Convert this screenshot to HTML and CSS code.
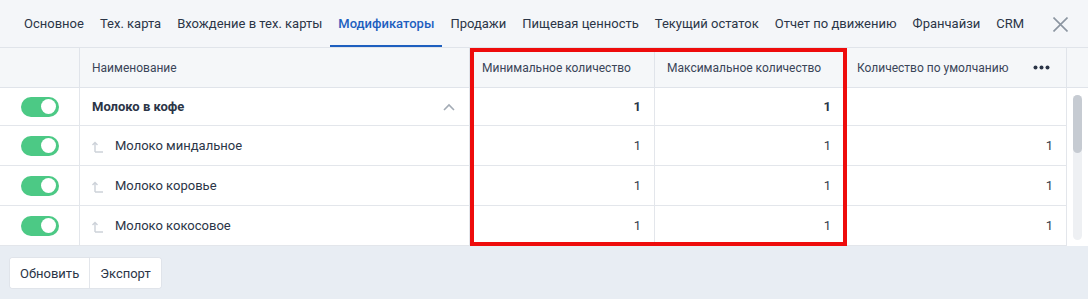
FILE: index.html
```html
<!DOCTYPE html>
<html lang="ru">
<head>
<meta charset="utf-8">
<link rel="stylesheet" href="styles.css">
</head>
<body>
<div class="page">
  <nav class="tabs">
    <span class="tab">Основное</span>
    <span class="tab">Тех. карта</span>
    <span class="tab">Вхождение в тех. карты</span>
    <span class="tab active">Модификаторы</span>
    <span class="tab">Продажи</span>
    <span class="tab">Пищевая ценность</span>
    <span class="tab">Текущий остаток</span>
    <span class="tab">Отчет по движению</span>
    <span class="tab">Франчайзи</span>
    <span class="tab">CRM</span>
    <span class="close"><svg width="15" height="15" viewBox="0 0 15 15"><path d="M0.5 0.5 L14.5 14.5 M14.5 0.5 L0.5 14.5" stroke="#8b95a1" stroke-width="1.6" fill="none"/></svg></span>
  </nav>
  <div class="table-wrap">
    <div class="grid">
      <div class="h c-tog"></div>
      <div class="h c-name">Наименование</div>
      <div class="h c-num">Минимальное количество</div>
      <div class="h c-num">Максимальное количество</div>
      <div class="h c-def"><span>Количество по умолчанию</span><svg class="dots" width="17" height="5" viewBox="0 0 17 5"><circle cx="2.5" cy="2.5" r="2" fill="#2b3547"/><circle cx="8.5" cy="2.5" r="2" fill="#2b3547"/><circle cx="14.5" cy="2.5" r="2" fill="#2b3547"/></svg></div>
      <div class="h c-sc"></div>

      <div class="r first c-tog"><span class="toggle"><span class="knob"></span></span></div>
      <div class="r first c-name parent"><span>Молоко в кофе</span><svg class="chev" width="12" height="8" viewBox="0 0 12 8"><path d="M1 7 L6 2 L11 7" stroke="#a3abb5" stroke-width="1.6" fill="none"/></svg></div>
      <div class="r first v">1</div>
      <div class="r first v">1</div>
      <div class="r first v"></div>
      <div class="scroll"><div class="track"><div class="thumb"></div></div></div>

      <div class="r c-tog"><span class="toggle"><span class="knob"></span></span></div>
      <div class="r c-name child"><svg class="sub" width="12" height="12" viewBox="0 0 12 12"><path d="M3 11 L3 1.5 M0.5 4 L3 1.5 L5.5 4 M3 11 L11 11" stroke="#cdd2d9" stroke-width="1.4" fill="none"/></svg><span>Молоко миндальное</span></div>
      <div class="r v">1</div>
      <div class="r v">1</div>
      <div class="r v">1</div>

      <div class="r c-tog"><span class="toggle"><span class="knob"></span></span></div>
      <div class="r c-name child"><svg class="sub" width="12" height="12" viewBox="0 0 12 12"><path d="M3 11 L3 1.5 M0.5 4 L3 1.5 L5.5 4 M3 11 L11 11" stroke="#cdd2d9" stroke-width="1.4" fill="none"/></svg><span>Молоко коровье</span></div>
      <div class="r v">1</div>
      <div class="r v">1</div>
      <div class="r v">1</div>

      <div class="r c-tog"><span class="toggle"><span class="knob"></span></span></div>
      <div class="r c-name child"><svg class="sub" width="12" height="12" viewBox="0 0 12 12"><path d="M3 11 L3 1.5 M0.5 4 L3 1.5 L5.5 4 M3 11 L11 11" stroke="#cdd2d9" stroke-width="1.4" fill="none"/></svg><span>Молоко кокосовое</span></div>
      <div class="r v">1</div>
      <div class="r v">1</div>
      <div class="r v">1</div>
    </div>
    <div class="highlight"></div>
  </div>
  <div class="footer">
    <div class="btns">
      <button class="btn">Обновить</button>
      <button class="btn">Экспорт</button>
    </div>
  </div>
</div>
</body>
</html>
```

FILE: styles.css
```css
* { box-sizing: border-box; }
html, body { margin: 0; padding: 0; }
body {
  font-family: Roboto, "Noto Sans", sans-serif;
  color: #2b3547;
  background: #e8edf3;
  width: 1088px;
  height: 299px;
  overflow: hidden;
}
.tabs {
  display: flex;
  align-items: center;
  height: 48px;
  padding-left: 16px;
  background: #f4f6f9;
  border-bottom: 1px solid #e0e4ea;
  font-size: 13px;
}
.tab {
  padding: 0 8px;
  height: 47px;
  display: flex;
  align-items: center;
  color: #2b3547;
  white-space: nowrap;
  border-bottom: 2px solid transparent;
  padding-top: 2px;
}
.tab.active {
  color: #1d5fbf;
  font-weight: 500;
  border-bottom-color: #1d5fbf;
}
.close {
  margin-left: 21px;
  display: flex;
  align-items: center;
  padding-top: 2px;
}
.table-wrap {
  position: relative;
  background: #fff;
}
.grid {
  display: grid;
  grid-template-columns: 80px 390px 185px 190px 222px 21px;
  grid-template-rows: 40px 38px 40px 40px 40px;
}
.h {
  background: #f5f7f9;
  border-bottom: 1px solid #e0e4ea;
  border-right: 1px solid #e0e4ea;
  font-size: 12px;
  color: #3a4558;
  display: flex;
  align-items: center;
  padding: 0 12px;
}
.h.c-sc { border-right: none; }
.c-def { justify-content: space-between; padding-right: 16px; }
.dots { display: block; }
.r {
  border-bottom: 1px solid #e3e6eb;
  border-right: 1px solid #e3e6eb;
  display: flex;
  align-items: center;
  font-size: 13px;
  background: #fff;
}
.c-tog { justify-content: center; }
.c-name { padding: 0 12px; }
.parent { justify-content: space-between; font-weight: 700; }
.chev { margin-right: 2px; }
.child .sub { margin-right: 11px; margin-top: 2px; }
.v { justify-content: flex-end; padding-right: 13px; color: #333c4b; }
.first.v { font-weight: 700; color: #2b3547; }
.toggle {
  width: 38px;
  height: 20px;
  border-radius: 10px;
  background: #4cc985;
  display: flex;
  align-items: center;
  justify-content: flex-end;
  padding-right: 3px;
}
.knob {
  width: 15px;
  height: 15px;
  border-radius: 50%;
  background: #fff;
}
.scroll {
  grid-row: span 4;
  background: #fff;
  padding: 7px 6px 6px 6px;
}
.track {
  height: 145px;
  width: 9px;
  background: #eef0f3;
  border-radius: 5px;
}
.thumb {
  height: 58px;
  width: 9px;
  background: #c6cbd2;
  border-radius: 5px;
}
.highlight {
  position: absolute;
  left: 470px;
  top: 0;
  width: 377px;
  height: 198px;
  border: 4px solid #ee0c0c;
  pointer-events: none;
}
.footer {
  padding: 12px 10px;
}
.btns {
  display: inline-flex;
  background: #fff;
  border-radius: 3px;
  box-shadow: 0 0 0 1px #e0e4ea;
}
.btn {
  font-family: Roboto, "Noto Sans", sans-serif;
  font-size: 13px;
  color: #2b3547;
  background: #fff;
  border: none;
  height: 30px;
  padding: 0 10px;
  border-radius: 3px;
}
.btn + .btn { border-left: 1px solid #e3e6eb; border-radius: 0 3px 3px 0; }
```
